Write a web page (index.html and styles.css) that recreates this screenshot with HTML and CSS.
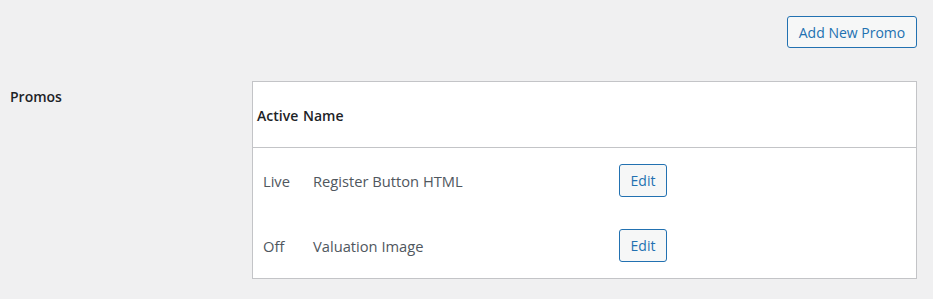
FILE: index.html
```html
<!DOCTYPE html>
<html lang="en">
<head>
    <meta charset="UTF-8">
    <meta name="viewport" content="width=device-width, initial-scale=1.0">
    <title>Promos</title>
    <link rel="stylesheet" href="styles.css">
</head>
<body>
    <div class="wrap">
        <div class="top-actions">
            <button class="button button-add">Add New Promo</button>
        </div>

        <div class="form-row">
            <div class="form-label">Promos</div>
            <div class="promo-table">
                <div class="table-head">
                    <div class="th th-active">Active</div>
                    <div class="th th-name">Name</div>
                    <div class="th"></div>
                </div>
                <div class="table-row">
                    <div class="td">Live</div>
                    <div class="td">Register Button HTML</div>
                    <div class="td"><button class="button button-small">Edit</button></div>
                </div>
                <div class="table-row">
                    <div class="td">Off</div>
                    <div class="td">Valuation Image</div>
                    <div class="td"><button class="button button-small">Edit</button></div>
                </div>
            </div>
        </div>
    </div>
</body>
</html>
```

FILE: styles.css
```css
:root {
    --primary-color: #2271b1;
    --background-color: #f0f0f1;
    --text-color: #1d2327;
    --body-text: #50575e;
    --border-color: #c3c4c7;
}

* {
    margin: 0;
    padding: 0;
    box-sizing: border-box;
}

body {
    font-family: 'Open Sans', 'Noto Sans', sans-serif;
    font-size: 14px;
    color: var(--text-color);
    background-color: var(--background-color);
}

.wrap {
    padding: 16px 16px 0 10px;
}

.top-actions {
    display: flex;
    justify-content: flex-end;
}

.button {
    font-family: inherit;
    font-size: 14px;
    height: 32px;
    padding: 0;
    color: var(--primary-color);
    background: #f6f7f7;
    border: 1px solid var(--primary-color);
    border-radius: 3px;
    cursor: pointer;
}

.button-add {
    width: 130px;
}

.button-small {
    width: 48px;
    height: 33px;
}

.form-row {
    display: flex;
    margin-top: 33px;
}

.form-label {
    width: 242px;
    font-weight: 600;
    padding-top: 6px;
}

.promo-table {
    flex: 1;
    background: #fff;
    border: 1px solid var(--border-color);
}

.table-head,
.table-row {
    display: grid;
    grid-template-columns: 50px 306px 1fr;
    align-items: center;
}

.table-head {
    height: 66px;
    padding-top: 2px;
    border-bottom: 1px solid var(--border-color);
    font-weight: 600;
}

.th-active {
    padding-left: 4px;
}

.table-row {
    height: 65px;
    font-size: 14.7px;
    color: var(--body-text);
}

.td {
    padding-left: 10px;
}
```
